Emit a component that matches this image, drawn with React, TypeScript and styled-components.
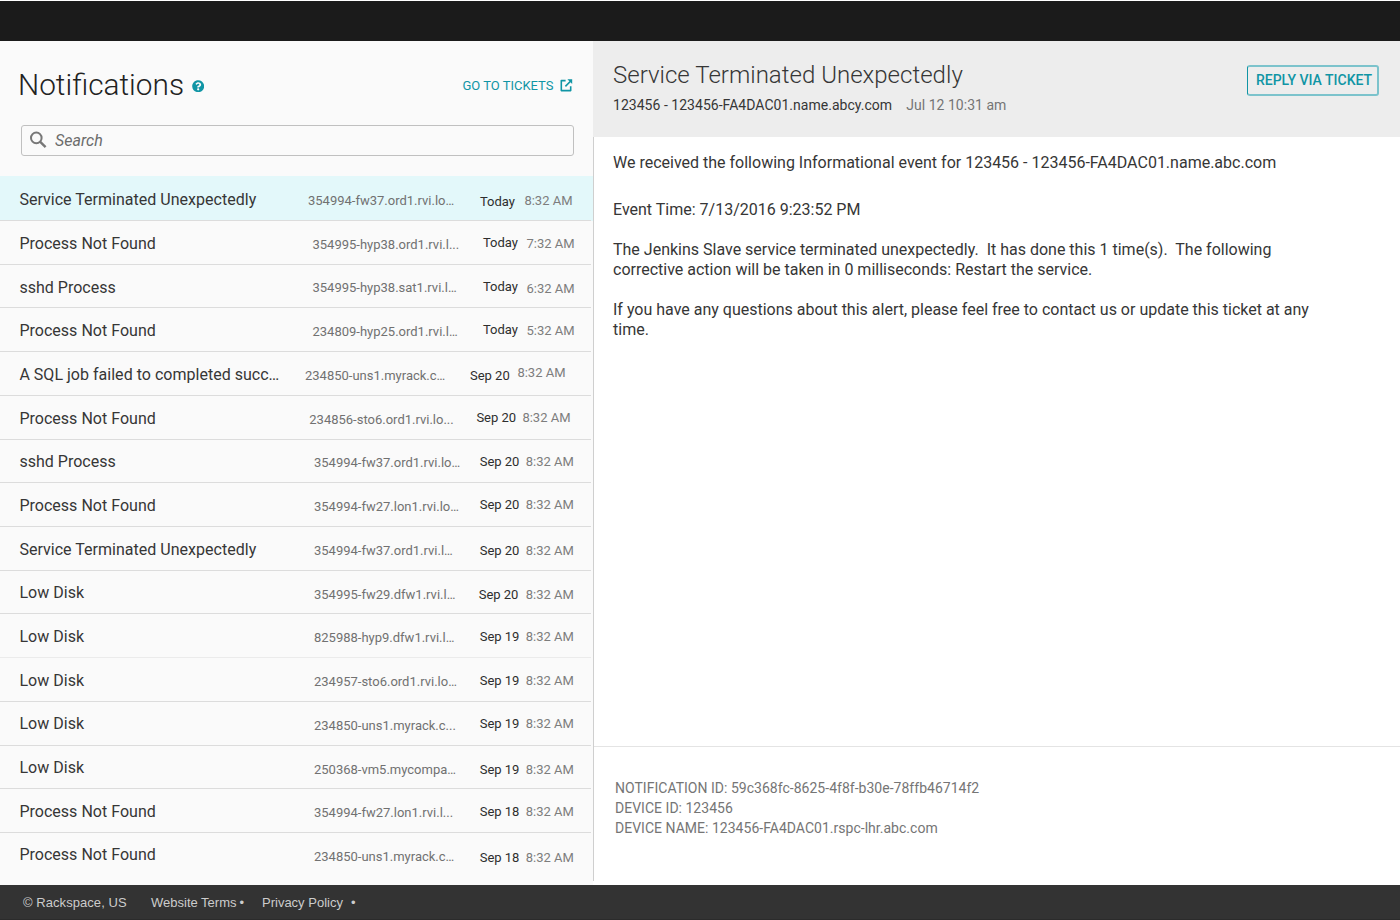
import React from "react";
import styled, { createGlobalStyle } from "styled-components";
import { FaQuestionCircle } from "react-icons/fa";

const GlobalStyle = createGlobalStyle`
  * { box-sizing: border-box; }
  body {
    margin: 0;
    background: #fff;
    font-family: Roboto, "Liberation Sans", sans-serif;
    color: #363636;
  }
  p, h1, h2 { margin: 0; }
`;

const teal = "#1095a5";

const Page = styled.div`
  display: flex;
  flex-direction: column;
  height: 920px;
  width: 1400px;
  overflow: hidden;
`;

const TopBar = styled.header`
  height: 41px;
  flex: none;
  border-top: 1px solid #fff;
  background: #1b1b1b;
`;

const Columns = styled.main`
  display: grid;
  grid-template-columns: 593px 1fr;
  height: 844px;
`;

const ListPane = styled.section`
  display: flex;
  flex-direction: column;
  background: #fafafa;
`;

const ListHeader = styled.div`
  display: flex;
  align-items: flex-start;
  height: 84px;
  padding: 26px 20px 0 18px;
`;

const PageTitle = styled.h1`
  font-size: 29.8px;
  font-weight: 300;
  line-height: 35px;
  color: #222;
  width: 174px;
  white-space: nowrap;
`;

const HelpIcon = styled(FaQuestionCircle)`
  width: 12.4px;
  height: 12.4px;
  margin-top: 13px;
  color: ${teal};
`;

const TicketsLink = styled.a`
  display: flex;
  margin-left: auto;
  padding-top: 11px;
  font-size: 13px;
  line-height: 15px;
  color: ${teal};

  svg {
    width: 14px;
    height: 14px;
    margin: 0 0 0 5.5px;
  }
`;

const SearchBox = styled.label`
  display: flex;
  flex: none;
  height: 31px;
  margin: 0 19px 20px 21px;
  padding: 3px 5px;
  border: 1px solid #c0c0c0;
  border-radius: 3px;
  color: #777;

  svg {
    width: 23px;
    height: 23px;
  }
`;

const SearchInput = styled.input`
  flex: 1;
  height: 23px;
  margin-left: 5px;
  padding: 0;
  border: 0;
  outline: 0;
  background: none;
  font: italic 16px/19px Roboto, sans-serif;
  &::placeholder { color: #6c6c6c; opacity: 1; }
`;

const List = styled.div`
  display: flex;
  flex-direction: column;
`;

const Row = styled.div<{ $height: number; $selected?: boolean; $faint?: boolean; $last?: boolean }>`
  display: flex;
  align-items: flex-start;
  height: ${(p) => p.$height}px;
  padding-left: 19.4px;
  white-space: nowrap;
  background: linear-gradient(${(p) => (p.$last ? "transparent, transparent" : p.$faint ? "#ebebeb, #ebebeb" : "#dcdcdc, #dcdcdc")})
    left bottom / 591px 1px no-repeat ${(p) => (p.$selected ? "#e3f8fa" : "#fafafa")};
`;

const Name = styled.span<{ $top: number; $width: number }>`
  width: ${(p) => p.$width}px;
  margin-top: ${(p) => p.$top}px;
  font-size: 16px;
  line-height: 19px;
  letter-spacing: 0.02px;
`;

const Device = styled.span<{ $top: number; $width: number }>`
  width: ${(p) => p.$width}px;
  margin-top: ${(p) => p.$top}px;
  font-size: 13px;
  line-height: 15px;
  color: #717171;
`;

const Day = styled(Device)`
  color: #2e2e2e;
`;

const Time = styled.span<{ $top: number }>`
  margin-top: ${(p) => p.$top}px;
  font-size: 13px;
  line-height: 15px;
  color: #7d7d7d;
`;

const DetailPane = styled.section`
  display: flex;
  flex-direction: column;
`;

const DetailHeader = styled.div`
  display: flex;
  justify-content: space-between;
  align-items: flex-start;
  height: 96px;
  padding: 20px 21px 0 20px;
  background: #ededed;
`;

const DetailTitle = styled.h2`
  font-size: 24px;
  font-weight: 300;
  line-height: 29px;
  letter-spacing: 0.02px;
`;

const DetailSub = styled.p`
  display: flex;
  gap: 14px;
  margin-top: 7px;
  font-size: 14px;
  line-height: 16px;
  letter-spacing: 0.03px;

  time { color: #757575; }
`;

const ReplyButton = styled.button`
  width: 132px;
  height: 31px;
  margin-top: 4px;
  padding: 0 0 2px 3px;
  border: solid #7cc3cc;
  border-width: 2px 2px 2px 1px;
  border-left-color: ${teal};
  border-radius: 3px;
  background: none;
  font: 500 14px/16px Roboto, sans-serif;
  color: ${teal};
  white-space: nowrap;
`;

const DetailContent = styled.div`
  display: flex;
  flex-direction: column;
  height: 744px;
  border-left: 1px solid #cfcfcf;
`;

const Message = styled.article`
  height: 609px;
  padding: 16px 60px 0 19px;
  font-size: 16px;
  line-height: 20px;

  p + p { margin-top: 20px; }
  p:first-child { margin-bottom: 27px; }
`;

const Meta = styled.div`
  flex: 1;
  border-top: 1px solid #e4e4e4;
  padding: 31px 0 0 21px;
  font-size: 14px;
  line-height: 20px;
  letter-spacing: 0.02px;
  color: #757575;
`;

const Footer = styled.footer`
  display: flex;
  height: 35px;
  padding: 10px 0 0 23px;
  background: #333;
  border-bottom: 1px solid #2b2b2b;
  font: 13px/15px "Liberation Sans", Arial, sans-serif;
  color: #ccc;
`;

const FooterItem = styled.span<{ $width: number; $gap?: number }>`
  display: flex;
  gap: ${(p) => p.$gap ?? 0}px;
  width: ${(p) => p.$width}px;
  white-space: nowrap;

  &:first-child { letter-spacing: 0.06px; }
`;

const ExternalLinkIcon = () => (
  <svg viewBox="0 0 14 14" fill="none" stroke="currentColor" strokeWidth="1.6">
    <path d="M6.6 2.6H2.3v10h9.4V8.2" strokeLinejoin="round" />
    <path d="M6.4 8.4 12 2.8" />
    <path d="M8.4 1.2h4.8v4.8z" fill="currentColor" stroke="none" />
  </svg>
);

const SearchIcon = () => (
  <svg viewBox="0 0 23 23" fill="none" stroke="currentColor">
    <circle cx="9.3" cy="8.9" r="5.3" strokeWidth="2" />
    <path d="m13 12.6 5.6 5.6" strokeWidth="2.4" />
  </svg>
);

interface Notice {
  height: number;
  name: string;
  nameTop: number;
  device: string;
  day: string;
  time: string;
  /* left edges of the device, day and time cells */
  x: [number, number, number];
  /* top margins of the same three cells */
  y: [number, number, number];
}

const n = (
  height: number, name: string, nameTop: number, device: string, day: string, time: string,
  x: [number, number, number], y: [number, number, number],
): Notice => ({ height, name, nameTop, device, day, time, x, y });

const notices: Notice[] = [
  n(45, "Service Terminated Unexpectedly", 14, "354994-fw37.ord1.rvi.lo…", "Today", "8:32 AM", [308, 480, 524.4], [17, 18, 17]),
  n(44, "Process Not Found", 13, "354995-hyp38.ord1.rvi.l...", "Today", "7:32 AM", [312.5, 483, 526.5], [16, 14, 15]),
  n(43, "sshd Process", 13, "354995-hyp38.sat1.rvi.l…", "Today", "6:32 AM", [312.5, 483, 526.5], [15, 14, 16]),
  n(44, "Process Not Found", 13, "234809-hyp25.ord1.rvi.l…", "Today", "5:32 AM", [312.5, 483, 526.5], [16, 14, 15]),
  n(44, "A SQL job failed to completed succ…", 13, "234850-uns1.myrack.c…", "Sep 20", "8:32 AM", [305, 470, 517.4], [16, 16, 13]),
  n(44, "Process Not Found", 13, "234856-sto6.ord1.rvi.lo...", "Sep 20", "8:32 AM", [309.3, 476.4, 522.4], [16, 14, 14]),
  n(43, "sshd Process", 12, "354994-fw37.ord1.rvi.lo…", "Sep 20", "8:32 AM", [314, 479.7, 525.7], [15, 14, 14]),
  n(44, "Process Not Found", 13, "354994-fw27.lon1.rvi.lo…", "Sep 20", "8:32 AM", [314, 479.7, 525.7], [16, 14, 14]),
  n(44, "Service Terminated Unexpectedly", 13, "354994-fw37.ord1.rvi.l…", "Sep 20", "8:32 AM", [314, 479.7, 525.7], [16, 16, 16]),
  n(43, "Low Disk", 12, "354995-fw29.dfw1.rvi.l…", "Sep 20", "8:32 AM", [314, 478.7, 525.7], [16, 16, 16]),
  n(44, "Low Disk", 13, "825988-hyp9.dfw1.rvi.l…", "Sep 19", "8:32 AM", [314, 479.7, 525.7], [16, 15, 15]),
  n(44, "Low Disk", 13, "234957-sto6.ord1.rvi.lo…", "Sep 19", "8:32 AM", [314, 479.7, 525.7], [16, 15, 15]),
  n(44, "Low Disk", 12, "234850-uns1.myrack.c...", "Sep 19", "8:32 AM", [314, 479.7, 525.7], [16, 14, 14]),
  n(43, "Low Disk", 12, "250368-vm5.mycompa…", "Sep 19", "8:32 AM", [314, 479.7, 525.7], [16, 16, 16]),
  n(44, "Process Not Found", 13, "354994-fw27.lon1.rvi.l...", "Sep 18", "8:32 AM", [314, 479.7, 525.7], [16, 15, 15]),
  n(52, "Process Not Found", 12, "234850-uns1.myrack.c…", "Sep 18", "8:32 AM", [314, 479.7, 525.7], [16, 17, 17]),
];

export default function App() {
  return (
    <Page>
      <GlobalStyle />
      <TopBar />
      <Columns>
        <ListPane>
          <ListHeader>
            <PageTitle>Notifications</PageTitle>
            <HelpIcon />
            <TicketsLink>
              GO TO TICKETS
              <ExternalLinkIcon />
            </TicketsLink>
          </ListHeader>
          <SearchBox>
            <SearchIcon />
            <SearchInput placeholder="Search" />
          </SearchBox>
          <List>
            {notices.map((item, i) => (
              <Row key={i} $height={item.height} $selected={i === 0} $faint={i === 10} $last={i === notices.length - 1}>
                <Name $top={item.nameTop} $width={item.x[0] - 19.4}>{item.name}</Name>
                <Device $top={item.y[0]} $width={item.x[1] - item.x[0]}>{item.device}</Device>
                <Day $top={item.y[1]} $width={item.x[2] - item.x[1]}>{item.day}</Day>
                <Time $top={item.y[2]}>{item.time}</Time>
              </Row>
            ))}
          </List>
        </ListPane>
        <DetailPane>
          <DetailHeader>
            <div>
              <DetailTitle>Service Terminated Unexpectedly</DetailTitle>
              <DetailSub>
                <span>123456 - 123456-FA4DAC01.name.abcy.com</span>
                <time>Jul 12 10:31 am</time>
              </DetailSub>
            </div>
            <ReplyButton>REPLY VIA TICKET</ReplyButton>
          </DetailHeader>
          <DetailContent>
            <Message>
              <p>We received the following Informational event for 123456 - 123456-FA4DAC01.name.abc.com</p>
              <p>Event Time: 7/13/2016 9:23:52 PM</p>
              <p>
                The Jenkins Slave service terminated unexpectedly.&nbsp; It has done this 1 time(s).&nbsp; The following
                {" "}corrective action will be taken in 0 milliseconds: Restart the service.
              </p>
              <p>
                If you have any questions about this alert, please feel free to contact us or update this ticket at any
                {" "}time.
              </p>
            </Message>
            <Meta>
              <p>NOTIFICATION ID: 59c368fc-8625-4f8f-b30e-78ffb46714f2</p>
              <p>DEVICE ID: 123456</p>
              <p>DEVICE NAME: 123456-FA4DAC01.rspc-lhr.abc.com</p>
            </Meta>
          </DetailContent>
        </DetailPane>
      </Columns>
      <Footer>
        <FooterItem $width={128}>© Rackspace, US</FooterItem>
        <FooterItem $width={111} $gap={3}><span>Website Terms</span><span>•</span></FooterItem>
        <FooterItem $width={111} $gap={8}><span>Privacy Policy</span><span>•</span></FooterItem>
      </Footer>
    </Page>
  );
}
